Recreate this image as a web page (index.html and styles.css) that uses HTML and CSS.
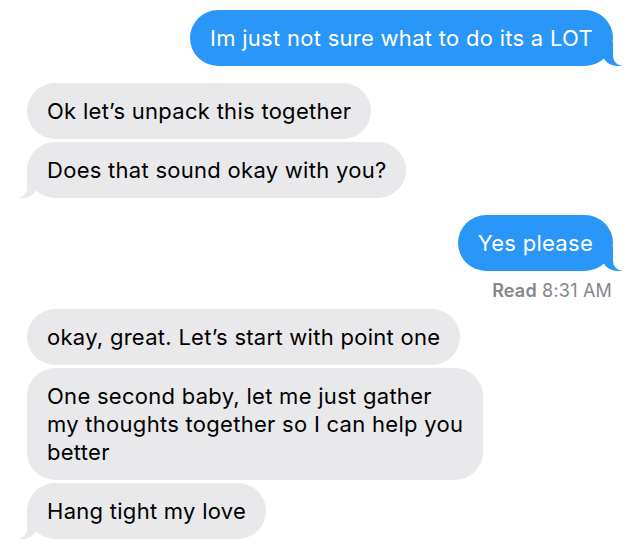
FILE: index.html
```html
<!DOCTYPE html>
<html lang="en">
<head>
<meta charset="utf-8">
<title>Messages</title>
<link rel="stylesheet" href="styles.css">
</head>
<body>
<main class="chat">
  <div class="bubble sent tail">Im just not sure what to do its a LOT</div>
  <div class="bubble recv first">Ok let’s unpack this together</div>
  <div class="bubble recv tail">Does that sound okay with you?</div>
  <div class="bubble sent tail first">Yes please</div>
  <div class="receipt"><b>Read</b> 8:31 AM</div>
  <div class="bubble recv">okay, great. Let’s start with point one</div>
  <div class="bubble recv">One second baby, let me just gather<br>my thoughts together so I can help you<br>better</div>
  <div class="bubble recv tail">Hang tight my love</div>
</main>
</body>
</html>
```
FILE: styles.css
```css
:root {
  --blue: #2a96f7;
  --grey: #e9e9eb;
}
html, body {
  margin: 0;
  background: #fff;
}
body {
  width: 640px;
  font-family: Inter, "Liberation Sans", sans-serif;
}
.chat {
  display: flex;
  flex-direction: column;
  padding: 7px 27px 0;
}
.bubble {
  position: relative;
  font-size: 22px;
  line-height: 28px;
  letter-spacing: 0.28px;
  padding: 14px 20px;
  border-radius: 28px;
  margin-top: 3px;
  max-width: 480px;
}
.bubble.first {
  margin-top: 17px;
}
.sent {
  align-self: flex-end;
  background: var(--blue);
  color: #fff;
}
.recv {
  align-self: flex-start;
  background: var(--grey);
  color: #000;
}
.sent + .recv {
  margin-top: 17px;
}
.receipt + .recv {
  margin-top: 8px;
}
.tail::before,
.tail::after {
  content: "";
  position: absolute;
  bottom: 0;
  height: 24px;
}
.sent.tail::before {
  right: -9px;
  width: 20px;
  background: var(--blue);
  border-bottom-left-radius: 16px 14px;
}
.sent.tail::after {
  right: -26px;
  width: 26px;
  background: #fff;
  border-bottom-left-radius: 10px;
}
.recv.tail::before {
  left: -9px;
  width: 20px;
  background: var(--grey);
  border-bottom-right-radius: 16px 14px;
}
.recv.tail::after {
  left: -26px;
  width: 26px;
  background: #fff;
  border-bottom-right-radius: 10px;
}
.receipt {
  align-self: flex-end;
  margin-top: 10px;
  margin-right: 1px;
  font-size: 18px;
  line-height: 20px;
  letter-spacing: 0.2px;
  color: #86868b;
}
.receipt b {
  font-weight: 600;
}
```
